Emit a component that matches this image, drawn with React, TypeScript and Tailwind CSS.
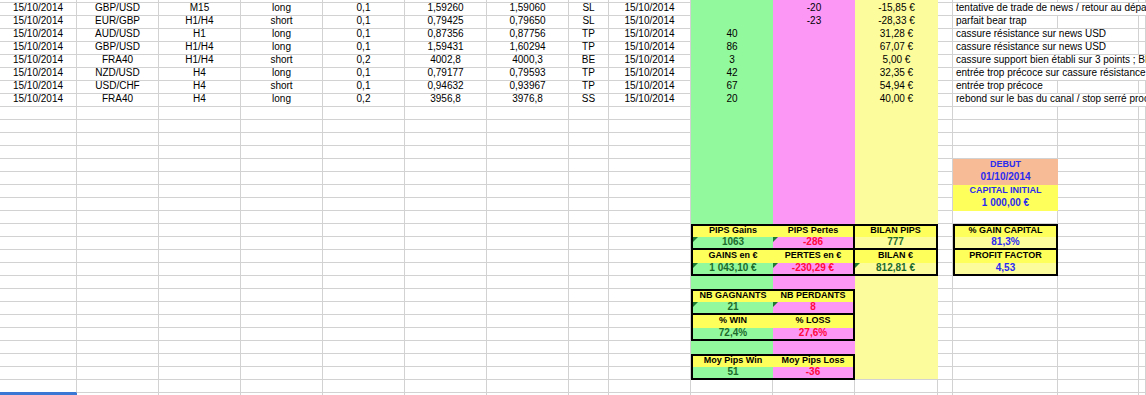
import React from 'react';

interface Cell {
  w: string;
  bg?: string;
  b?: string;
  t?: string;
  c?: string;
  tri?: boolean;
}

const W = [
  'w-[77px]', 'w-[82px]', 'w-[82px]', 'w-[82px]', 'w-[82px]', 'w-[82px]', 'w-[82px]',
  'w-[40px]', 'w-[82px]', 'w-[82px]', 'w-[82px]', 'w-[83px]', 'w-[15px]', 'w-[105px]',
  'w-[81px]', 'flex-1',
];

const G = 'border-r border-b border-[#d2d2d2]';
const GB = 'border-b border-[#d2d2d2]';
const GREEN = 'bg-[#93f99d]';
const PINK = 'bg-[#fc97f6]';
const LY = 'bg-[#fcfc9d]';
const SY = 'bg-[#ffff5b]';
const OR = 'bg-[#f7bc96]';

const T = 'text-[10px] leading-[10px] text-center text-black';
const HT = 'text-[9px] leading-[8px] font-bold text-center text-black';
const H = 'text-[9px] leading-[10px] font-bold text-center text-black';
const VG = 'text-[10px] leading-[10px] font-bold text-center text-[#1c6a2b]';
const VR = 'text-[10px] leading-[10px] font-bold text-center text-[#ff0a3c]';
const VB = 'text-[10px] leading-[10px] font-bold text-center text-[#2b2bf0]';
const HB = 'text-[9px] leading-[10px] font-bold text-center text-[#2b2bf0]';
const HTB = 'text-[9px] leading-[8px] font-bold text-center text-black';
const CM = 'text-[10px] leading-[10px] text-left pl-[3px] text-black';

type Span = 'all' | 'two' | 'one';
const DATA: { v: string[]; g: string; p: string; y: string; cm: string; span: Span }[] = [
  { v: ['15/10/2014', 'GBP/USD', 'M15', 'long', '0,1', '1,59260', '1,59060', 'SL', '15/10/2014'], g: '', p: '-20', y: '-15,85 €', cm: 'tentative de trade de news / retour au départ', span: 'all' },
  { v: ['15/10/2014', 'EUR/GBP', 'H1/H4', 'short', '0,1', '0,79425', '0,79650', 'SL', '15/10/2014'], g: '', p: '-23', y: '-28,33 €', cm: 'parfait bear trap', span: 'one' },
  { v: ['15/10/2014', 'AUD/USD', 'H1', 'long', '0,1', '0,87356', '0,87756', 'TP', '15/10/2014'], g: '40', p: '', y: '31,28 €', cm: 'cassure résistance sur news USD', span: 'two' },
  { v: ['15/10/2014', 'GBP/USD', 'H1/H4', 'long', '0,1', '1,59431', '1,60294', 'TP', '15/10/2014'], g: '86', p: '', y: '67,07 €', cm: 'cassure résistance sur news USD', span: 'two' },
  { v: ['15/10/2014', 'FRA40', 'H1/H4', 'short', '0,2', '4002,8', '4000,3', 'BE', '15/10/2014'], g: '3', p: '', y: '5,00 €', cm: 'cassure support bien établi sur 3 points ; BE', span: 'all' },
  { v: ['15/10/2014', 'NZD/USD', 'H4', 'long', '0,1', '0,79177', '0,79593', 'TP', '15/10/2014'], g: '42', p: '', y: '32,35 €', cm: 'entrée trop précoce sur cassure résistance', span: 'all' },
  { v: ['15/10/2014', 'USD/CHF', 'H4', 'short', '0,1', '0,94632', '0,93967', 'TP', '15/10/2014'], g: '67', p: '', y: '54,94 €', cm: 'entrée trop précoce', span: 'one' },
  { v: ['15/10/2014', 'FRA40', 'H4', 'long', '0,2', '3956,8', '3976,8', 'SS', '15/10/2014'], g: '20', p: '', y: '40,00 €', cm: 'rebond sur le bas du canal / stop serré proche', span: 'all' },
];

const OV: Record<string, Partial<Cell>> = {
  // DEBUT / CAPITAL INITIAL
  '12-13': { bg: OR, b: '', t: 'DEBUT', c: HB },
  '13-13': { bg: OR, b: '', t: '01/10/2014', c: VB },
  '14-13': { bg: SY, b: '', t: 'CAPITAL INITIAL', c: HB },
  '15-13': { bg: SY, b: '', t: '1 000,00 €', c: VB },
  // Box PIPS
  '17-9': { bg: SY, b: 'border-t-2 border-l-2 border-black', t: 'PIPS Gains', c: HT },
  '17-10': { bg: SY, b: 'border-t-2 border-r-2 border-black', t: 'PIPS Pertes', c: HT },
  '17-11': { bg: SY, b: 'border-t-2 border-r-2 border-black', t: 'BILAN PIPS', c: HT },
  '18-9': { bg: GREEN, b: 'border-l-2 border-b-2 border-black', t: '1063', c: VG, tri: true },
  '18-10': { bg: PINK, b: 'border-r-2 border-b-2 border-black', t: '-286', c: VR, tri: true },
  '18-11': { bg: LY, b: 'border-r-2 border-b-2 border-black', t: '777', c: VG },
  '19-9': { bg: SY, b: 'border-l-2 border-black', t: 'GAINS en €', c: H },
  '19-10': { bg: SY, b: 'border-r-2 border-black', t: 'PERTES en €', c: H },
  '19-11': { bg: SY, b: 'border-r-2 border-black', t: 'BILAN €', c: H },
  '20-9': { bg: GREEN, b: 'border-l-2 border-b-2 border-black', t: '1 043,10 €', c: VG, tri: true },
  '20-10': { bg: PINK, b: 'border-r-2 border-b-2 border-black', t: '-230,29 €', c: VR, tri: true },
  '20-11': { bg: LY, b: 'border-r-2 border-b-2 border-black', t: '812,81 €', c: VG, tri: true },
  // Capital box
  '17-13': { bg: SY, b: 'border-t-2 border-l-2 border-r-2 border-black', t: '% GAIN CAPITAL', c: HTB },
  '18-13': { bg: LY, b: 'border-l-2 border-r-2 border-b-2 border-black', t: '81,3%', c: VB },
  '19-13': { bg: SY, b: 'border-l-2 border-r-2 border-black', t: 'PROFIT FACTOR', c: H },
  '20-13': { bg: LY, b: 'border-l-2 border-r-2 border-b-2 border-black', t: '4,53', c: VB },
  // NB box
  '22-9': { bg: SY, b: 'border-t-2 border-l-2 border-black', t: 'NB GAGNANTS', c: HT },
  '22-10': { bg: SY, b: 'border-t-2 border-r-2 border-black', t: 'NB PERDANTS', c: HT },
  '23-9': { bg: GREEN, b: 'border-l-2 border-b-2 border-black', t: '21', c: VG, tri: true },
  '23-10': { bg: PINK, b: 'border-r-2 border-b-2 border-black', t: '8', c: VR, tri: true },
  '24-9': { bg: SY, b: 'border-l-2 border-black', t: '% WIN', c: H },
  '24-10': { bg: SY, b: 'border-r-2 border-black', t: '% LOSS', c: H },
  '25-9': { bg: GREEN, b: 'border-l-2 border-b-2 border-black', t: '72,4%', c: VG },
  '25-10': { bg: PINK, b: 'border-r-2 border-b-2 border-black', t: '27,6%', c: VR },
  // Moy box
  '27-9': { bg: SY, b: 'border-t-2 border-l-2 border-black', t: 'Moy Pips Win', c: HT },
  '27-10': { bg: SY, b: 'border-t-2 border-r-2 border-black', t: 'Moy Pips Loss', c: HT },
  '28-9': { bg: GREEN, b: 'border-l-2 border-b-2 border-black', t: '51', c: VG },
  '28-10': { bg: PINK, b: 'border-r-2 border-b-2 border-black', t: '-36', c: VR },
  // selection
  '29-0': { b: 'border-r border-b border-r-[#d2d2d2] border-b-[#3a77d5]' },
};

const COLORS = [GREEN, PINK, LY];

function buildRow(r: number): Cell[] {
  const cells: Cell[] = [];
  for (let i = 0; i < 16; i++) {
    let cell: Cell = { w: W[i], bg: 'bg-white', b: r === 30 ? 'border-r border-[#d2d2d2]' : G };
    if (i >= 9 && i <= 11 && r <= 28) {
      cell = { w: W[i], bg: COLORS[i - 9], b: r === 28 ? GB : '' };
    }
    if (r === 30 && i === 0) cell = { w: W[0], bg: 'bg-[#3a77d5]', b: '' };
    const o = OV[`${r}-${i}`];
    if (o) cell = { ...cell, ...o };
    cells.push(cell);
  }
  if (r >= 0 && r <= 7) {
    const d = DATA[r];
    d.v.forEach((v, i) => {
      cells[i] = { ...cells[i], t: v, c: T };
    });
    cells[9] = { ...cells[9], t: d.g, c: T };
    cells[10] = { ...cells[10], t: d.p, c: T };
    cells[11] = { ...cells[11], t: d.y, c: T };
    if (d.span === 'all') {
      cells.splice(13, 3, { w: 'flex-1', bg: 'bg-white', b: GB, t: d.cm, c: CM });
    } else if (d.span === 'two') {
      cells.splice(13, 2, { w: 'w-[186px]', bg: 'bg-white', b: G, t: d.cm, c: CM });
    } else {
      cells[13] = { ...cells[13], t: d.cm, c: CM };
    }
  }
  return cells;
}

const ROWS: number[] = Array.from({ length: 32 }, (_, k) => k - 1);

function Row({ r }: { r: number }) {
  const h = r === -1 ? 'h-[3px]' : r === 30 ? 'h-[2px]' : 'h-[13px]';
  const cells = buildRow(r);
  return (
    <div className={`flex ${h}`}>
      {cells.map((c, i) => (
        <div
          key={i}
          className={`${c.w} ${c.bg ?? ''} ${c.b ?? ''} ${c.c ?? ''} shrink-0 min-w-0 relative overflow-hidden whitespace-nowrap`}
        >
          {c.tri && (
            <svg className="absolute left-0 top-0" width="5" height="5" viewBox="0 0 5 5">
              <path d="M0 0H5L0 5Z" fill="#1d7a30" />
            </svg>
          )}
          {c.t}
        </div>
      ))}
    </div>
  );
}

export default function App() {
  return (
    <div className="w-[1146px] h-[395px] overflow-hidden bg-white font-['Liberation_Sans',Arial,sans-serif] flex flex-col">
      {ROWS.map((r) => (
        <Row key={r} r={r} />
      ))}
    </div>
  );
}
